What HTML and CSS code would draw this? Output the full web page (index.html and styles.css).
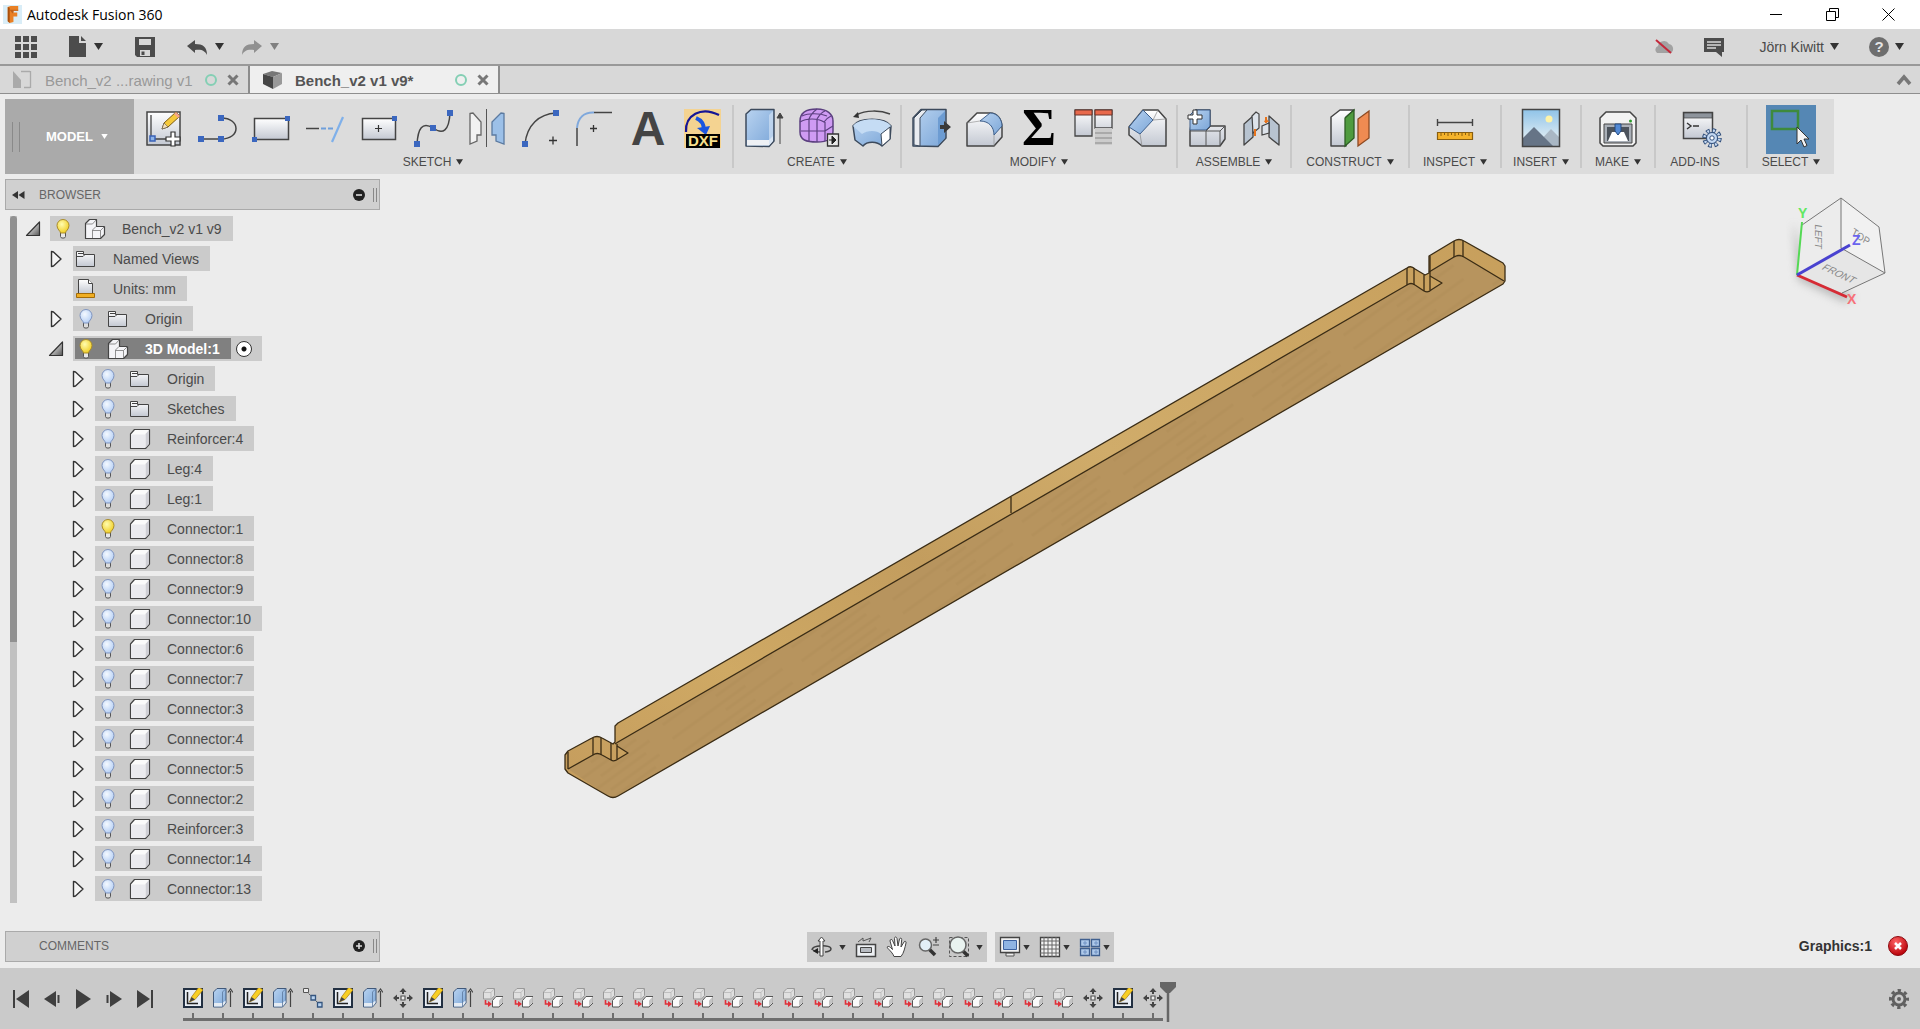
FILE: index.html
```html
<!DOCTYPE html>
<html lang="en">
    <head>
        <meta charset="UTF-8">
        <title>Autodesk Fusion 360</title>
        <link rel="stylesheet" href="styles.css">
    </head>
    <body>

        <!-- shared icons -->
        <svg class="sprite" aria-hidden="true">
            <defs>
                <linearGradient id="gWhite" x1="0" y1="0" x2="0" y2="1"><stop offset="0" stop-color="#fff"/><stop offset="1" stop-color="#c3c8d2"/></linearGradient>
                <linearGradient id="gBlue" x1="0" y1="0" x2="1" y2="1"><stop offset="0" stop-color="#b9d3f0"/><stop offset="1" stop-color="#7ba6d8"/></linearGradient>
                <linearGradient id="gSky" x1="0" y1="0" x2="0" y2="1"><stop offset="0" stop-color="#8fc3e8"/><stop offset="1" stop-color="#f2f6f6"/></linearGradient>
                <linearGradient id="gTri" x1="0" y1="0" x2="1" y2="1"><stop offset="0.3" stop-color="#ddd"/><stop offset="1" stop-color="#555"/></linearGradient>
                <radialGradient id="gOn" cx="0.4" cy="0.35" r="0.7"><stop offset="0" stop-color="#fffcb0"/><stop offset="1" stop-color="#f0cc1c"/></radialGradient>
                <radialGradient id="gOff" cx="0.4" cy="0.35" r="0.7"><stop offset="0" stop-color="#f4f9ff"/><stop offset="1" stop-color="#b3cdf4"/></radialGradient>
                <radialGradient id="gRed" cx="0.4" cy="0.3" r="0.7"><stop offset="0" stop-color="#f66"/><stop offset="1" stop-color="#b80008"/></radialGradient>
            </defs>

            <symbol id="down" viewBox="0 0 9 7"><path d="M0 0h9L4.500 7z" fill="currentColor"/></symbol>

            <!-- browser tree -->
            <symbol id="bulb-on" viewBox="0 0 22 22">
                <path d="M8.500 14h5v4.500l-1 1.500h-3l-1-1.500z" fill="#e8e8e8" stroke="#555"/>
                <path d="M8.500 15c0-2-3.500-3.500-3.500-7.500a6 6 0 0 1 12 0c0 4-3.500 5.500-3.500 7.500z" fill="url(#gOn)" stroke="#a98c2c"/>
            </symbol>
            <symbol id="bulb-off" viewBox="0 0 22 22">
                <path d="M8.500 14h5v4.500l-1 1.500h-3l-1-1.500z" fill="#ddd" stroke="#555"/>
                <path d="M8.500 15c0-2-3.500-3.500-3.500-7.500a6 6 0 0 1 12 0c0 4-3.500 5.500-3.500 7.500z" fill="url(#gOff)" stroke="#7f95c0"/>
            </symbol>
            <symbol id="folder" viewBox="0 0 22 22">
                <path d="M1.500 18.500v-15h7v3h11v12z" fill="url(#gWhite)" stroke="#444" stroke-linejoin="round"/>
                <path d="M2 8.500h6l2-2M3 5.500h5" fill="none" stroke="#444"/>
            </symbol>
            <symbol id="units" viewBox="0 0 22 22">
                <path d="M3.500 15.500v-14h10l4 4v10z" fill="url(#gWhite)" stroke="#444"/>
                <path d="M13.500 1.500v4h4" fill="#fff" stroke="#444"/>
                <path d="M1.500 15.500h18v4h-18z" fill="#f0ae23" stroke="#a36c08"/>
            </symbol>
            <symbol id="body" viewBox="0 0 22 22">
                <path d="M1.500 6l4-4.500h15V16l-4 4.500h-15z" fill="#fbfbfb" stroke="#444" stroke-width="1.200" stroke-linejoin="round"/>
                <path d="M2 6.500h14V20H2z" fill="#ebebef"/>
                <path d="M16.500 6l3.500-4V16l-3.500 4z" fill="#cfcfd5"/>
            </symbol>
            <symbol id="comp" viewBox="0 0 22 22">
                <path d="M1.500 20.500V5.500l4-4h7v7h8v8l-4 4z" fill="#f4f4f7" stroke="#444" stroke-width="1.200" stroke-linejoin="round"/>
                <path d="M8.500 20v-8l3.500-3.500M8.500 12.500h8l4-4M16.500 12.500V20M2 6h6.500l3.500-4" fill="none" stroke="#777" stroke-width=".8"/>
            </symbol>
            <symbol id="closed" viewBox="0 0 16 18"><path d="M3.500 1.500v15l2-.5 7.500-7-7.500-7z" fill="#f5f5f5" stroke="#333" stroke-width="1.400" stroke-linejoin="round"/></symbol>
            <symbol id="open" viewBox="0 0 16 18"><path d="M14.500 2v13.500H1.500z" fill="url(#gTri)" stroke="#333" stroke-width="1.200" stroke-linejoin="round"/></symbol>

            <!-- timeline -->
            <symbol id="t-sketch" viewBox="0 0 20 20">
                <path d="M1 1h18v18H1z" fill="#e9eef5" stroke="#223042" stroke-width="2"/>
                <path d="M4.500 4v11.500H15" fill="none" stroke="#222" stroke-width="1.500"/>
                <path d="M6.500 14l2-5L16-1l4 3-8 9.500z" fill="#f8cf25" stroke="#a87c14" stroke-width=".7"/>
                <path d="M6.500 14l2-5 3.500 2.500z" fill="#444"/>
            </symbol>
            <symbol id="t-extrude" viewBox="0 0 20 20">
                <path d="M.5 19V4l3.500-3.500h9V15l-3.500 4z" fill="url(#gBlue)" stroke="#41597a"/>
                <path d="M1 15h8.500l3-2.500V15l-3 3.500H1z" fill="#e4ebf3"/>
                <path d="M9.500 19V4L13 .5" fill="none" stroke="#5b779d" stroke-width=".8"/>
                <path d="M17.500 19V3M15 4.500L17.500 1 20 4.500" fill="none" stroke="#444" stroke-width="1.200"/>
            </symbol>
            <symbol id="t-pattern" viewBox="0 0 20 20">
                <path d="M4 4l12 12" stroke="#555" stroke-dasharray="2 1"/>
                <path d="M.5.5h5v4h-5z" fill="#eee" stroke="#555"/>
                <path d="M8 7.500h4.500V12H8zM14.500 14.500H19V19h-4.500z" fill="#b9d3f0" stroke="#34557f" stroke-width="1.300"/>
            </symbol>
            <symbol id="t-move" viewBox="0 0 20 20">
                <path d="M10 0l3.500 4h-7zM10 20l3.500-4h-7zM0 10l4-3.500v7zM20 10l-4-3.500v7z" fill="#444"/>
                <path d="M10 3v3M10 14v3M3 10h3M14 10h3" stroke="#444" stroke-width="2"/>
                <path d="M8 8h4v4H8z" fill="#eee" stroke="#555" stroke-width="1.200"/>
            </symbol>
            <symbol id="t-insert" viewBox="0 0 20 20">
                <path d="M.5 11V4l3.500-3.500h7.500v7l-3 3.500z" fill="#e0e0e0" stroke="#999"/>
                <path d="M8 10.500V4.500L11 1M1 4.500h7" fill="none" stroke="#b0b0b0" stroke-width=".7"/>
                <path d="M9.500 19v-6.500l3.500-4h7v6.500l-4 4z" fill="#fafafa" stroke="#555" stroke-linejoin="round"/>
                <path d="M16 18.500v-6l3.500-3.500v5.500z" fill="#c4c4c4"/>
                <path d="M2.500 12v4h3" fill="none" stroke="#e0303a" stroke-width="1.600"/><path d="M5 13l4 3-4 3z" fill="#e0303a"/>
            </symbol>
            <symbol id="gear" viewBox="0 0 22 22">
                <circle cx="11" cy="11" r="8.500" fill="none" stroke="currentColor" stroke-width="3" stroke-dasharray="3.300 3.376" stroke-dashoffset="1.600"/>
                <circle cx="11" cy="11" r="6" fill="none" stroke="currentColor" stroke-width="3"/>
                <circle cx="11" cy="11" r="2" fill="currentColor"/>
            </symbol>
        </svg>

        <header class="titlebar">
            <svg class="logo" viewBox="0 0 20 20"><path d="M0 0h20v20H0z" fill="#d9edf7"/><path d="M5 2l3-1h8v5h-5v2h4v4h-4v6l-4 1-2-2z" fill="#e98024"/><path d="M5 2l2 1v16l-2-2z" fill="#a9500d"/><path d="M7 5h9v1h-5v2l-1 1z" fill="#c0611a"/></svg>
            <h1 class="title">Autodesk Fusion 360</h1>
            <button class="win" aria-label="Minimize"><svg viewBox="0 0 13 13"><path d="M0 6.500h12" stroke="#000"/></svg></button>
            <button class="win" aria-label="Restore"><svg viewBox="0 0 13 13"><path d="M.5 3.500h9v9h-9zM3.500 3.500v-3h9v9h-3" fill="none" stroke="#000"/></svg></button>
            <button class="win" aria-label="Close"><svg viewBox="0 0 13 13"><path d="M.5.5l12 12M12.500.5l-12 12" stroke="#000"/></svg></button>
        </header>

        <div class="quickbar">
            <button aria-label="Data panel"><svg class="q22" viewBox="0 0 22 22"><path d="M0 0h6v6H0zM8 0h6v6H8zM16 0h6v6h-6zM0 8h6v6H0zM8 8h6v6H8zM16 8h6v6h-6zM0 16h6v6H0zM8 16h6v6H8zM16 16h6v6h-6z" fill="#4c4c4c"/></svg></button>
            <button aria-label="File"><svg class="doc" viewBox="0 0 17 21"><path d="M0 0h10v7h7v14H0zM12 0l5 5h-5z" fill="#4c4c4c"/></svg><svg class="down"><use href="#down"/></svg></button>
            <button aria-label="Save"><svg class="q20" viewBox="0 0 20 20"><path d="M0 0h20v20H2l-2-2z" fill="#4c4c4c"/><path d="M4 2h12v6H4zM5 13h10v6H5z" fill="#d8d8d8"/><path d="M6.500 14.500h3V18h-3z" fill="#4c4c4c"/></svg></button>
            <div class="history">
                <button aria-label="Undo"><svg class="q20" viewBox="0 0 20 20"><path d="M0 9l8-6v4c8 0 12 3 12 11-2-4-5-6-12-5v3z" fill="#4c4c4c"/></svg><svg class="down"><use href="#down"/></svg></button>
                <button class="dim" aria-label="Redo"><svg class="q20" viewBox="0 0 20 20"><path d="M20 9l-8-6v4C4 7 0 10 0 18c2-4 5-6 12-5v3z" fill="#909090"/></svg><svg class="down"><use href="#down"/></svg></button>
            </div>
            <div class="account">
                <button aria-label="Work offline"><svg class="q20" viewBox="0 0 20 20"><path d="M3 16a4 4 0 0 1 1-7 6 6 0 0 1 11-2 5 5 0 0 1 2 9z" fill="#a2a2a2"/><path d="M2 3l15 13" stroke="#c4283a" stroke-width="2"/></svg></button>
                <button aria-label="Comments"><svg class="q20" viewBox="0 0 20 20"><path d="M0 1h20v14h-2v5l-6-5H0z" fill="#4c4c4c"/><path d="M3 5h14M3 8h14M3 11h9" stroke="#d8d8d8" stroke-width="1.400"/></svg></button>
                <button class="user">Jörn Kiwitt <svg class="down"><use href="#down"/></svg></button>
                <button class="help" aria-label="Help"><svg class="q20" viewBox="0 0 20 20"><circle cx="10" cy="10" r="10" fill="#6e6e6e"/><text x="10" y="15" text-anchor="middle" class="help-mark">?</text></svg><svg class="down"><use href="#down"/></svg></button>
            </div>
        </div>

        <nav class="tabs">
            <div class="tab">
                <svg class="tab-icon" viewBox="0 0 21 20"><path d="M1 18V1l8 9v8z" fill="#aaa"/><path d="M9 1.500h9M18.500 1v17M12 17.500h6" fill="none" stroke="#aaa" stroke-width="1.300"/></svg>
                <a href="#drawing">Bench_v2 ...rawing v1</a>
                <span class="ring"></span>
                <button aria-label="Close tab"><svg class="cross" viewBox="0 0 12 12"><path d="M1.500 1.500l9 9M10.500 1.500l-9 9" stroke="#777" stroke-width="3"/></svg></button>
            </div>
            <div class="tab current">
                <svg class="tab-icon" viewBox="0 0 21 20"><path d="M1 4l9-3 10 2-9 4z" fill="#777"/><path d="M1 4l10 3v12L1 14z" fill="#454545"/><path d="M11 7l9-4v11l-9 5z" fill="#999"/></svg>
                <a href="#bench">Bench_v2 v1 v9*</a>
                <span class="ring"></span>
                <button aria-label="Close tab"><svg class="cross" viewBox="0 0 12 12"><path d="M1.500 1.500l9 9M10.500 1.500l-9 9" stroke="#777" stroke-width="3"/></svg></button>
            </div>
            <button class="collapse" aria-label="Collapse"><svg viewBox="0 0 16 12"><path d="M2 10l6-7 6 7" fill="none" stroke="#777" stroke-width="3.500"/></svg></button>
        </nav>

        <main class="workspace">

            <!-- model canvas -->
            <svg class="canvas" viewBox="0 94 1920 874">
                <defs>
                    <pattern id="grain" width="260" height="17" patternUnits="userSpaceOnUse" patternTransform="rotate(-36)">
                        <path d="M0 3h80M110 7h90M30 12h60M170 15h70" stroke="#8f6f3c" stroke-opacity=".09" stroke-width="3"/>
                    </pattern>
                    <linearGradient id="edge" x1="0" y1="1" x2="1" y2="0">
                        <stop offset="0" stop-color="#c49c5d"/><stop offset=".2" stop-color="#cfa964"/><stop offset=".4" stop-color="#c39d5e"/><stop offset=".6" stop-color="#d0ac6a"/><stop offset="1" stop-color="#c79f5c"/>
                    </linearGradient>
                </defs>
                <path d="M565 755L568 751 592 738Q597 735 602 738L613 744 615 742V726L618 723 1407 268Q1411 265 1415 269L1425 275 1429 273V256L1454 241Q1459 238 1464 241L1503 263 1505 266V281L1503 284 618 796Q613 799 608 796L568 773 565 769Z" fill="url(#edge)"/>
                <path d="M568 769L593 755Q597 752 602 755L611 760Q614 762 618 759L628 753 617 746 618 742 1407 285Q1411 282 1415 285L1424 291Q1428 293 1431 290L1442 283 1430 276V271L1454 257Q1459 254 1464 257L1503 280 1503 284 618 796Q613 799 608 796Z" fill="#b7945e"/>
                <path d="M568 769L593 755Q597 752 602 755L611 760Q614 762 618 759L628 753 617 746 618 742 1407 285Q1411 282 1415 285L1424 291Q1428 293 1431 290L1442 283 1430 276V271L1454 257Q1459 254 1464 257L1503 280 1503 284 618 796Q613 799 608 796Z" fill="url(#grain)"/>
                <g class="outline">
                    <path d="M565 755L568 751 592 738Q597 735 602 738L613 744 615 742V726L618 723 1407 268Q1411 265 1415 269L1425 275 1429 273V256L1454 241Q1459 238 1464 241L1503 263 1505 266V281L1503 284 618 796Q613 799 608 796L568 773 565 769Z"/>
                    <path d="M568 769L593 755Q597 752 602 755L611 760Q614 762 618 759L628 753 617 746M615 744L618 742 1407 285Q1411 282 1415 285L1424 291Q1428 293 1431 290L1442 283 1430 276M1429 272L1454 257Q1459 254 1464 257L1504 281"/>
                    <path d="M568 752V769M593 738V755M601 738V755M611 743V760M617 744V759M1011 497V513M1407 268V285M1414 268V285M1424 275V291M1430 256V290M1454 241V257M1463 241V257"/>
                </g>
            </svg>

            <svg class="viewcube" viewBox="1780 185 120 125">
                <defs><filter id="soft"><feGaussianBlur stdDeviation="4"/></filter></defs>
                <path d="M1793 222l5 58 46 22 10-4-50-40z" fill="#888" opacity=".5" filter="url(#soft)"/>
                <path d="M1841 198L1879 227 1885 273 1842 293 1797 275 1802 225Z" fill="#e6e6e6"/>
                <path d="M1841 198V248L1797 275 1802 225Z" fill="#ececec"/>
                <path d="M1841 198L1879 227 1885 273 1841 248Z" fill="#f1f1f1"/>
                <path d="M1802 225L1841 198 1879 227 1885 273 1842 293M1841 198V248L1885 273" fill="none" stroke="#777"/>
                <path d="M1797 275L1802 222" stroke="#54d954" stroke-width="2"/>
                <path d="M1797 275L1847 297" stroke="#d62b35" stroke-width="3"/>
                <path d="M1797 275L1850 245" stroke="#4942d0" stroke-width="3"/>
                <text class="face" transform="translate(1815 224) rotate(90) skewX(-10)">LEFT</text>
                <text class="face" transform="translate(1851 234) rotate(35) skewX(10)">TOP</text>
                <text class="face" transform="translate(1821 269) rotate(25) skewX(-20)">FRONT</text>
                <text x="1798" y="218" fill="#63e863" class="axis">Y</text>
                <text x="1847" y="304" fill="#f77078" class="axis">X</text>
                <text x="1852" y="245" fill="#6a64ee" class="axis">Z</text>
            </svg>

            <div class="ribbon">
                <button class="mode"><span>MODEL</span> <svg class="down"><use href="#down"/></svg></button>

                <section class="group">
                    <div class="tools">
                        <button aria-label="Create sketch"><svg viewBox="0 0 36 38"><path d="M2 3h33v33H2z" fill="url(#gWhite)" stroke="#444" stroke-width="1.500"/><path d="M6 6v24h22" fill="none" stroke="#444" stroke-width="1.300"/><path d="M5 27h5v5H5z" fill="#8db4e8" stroke="#3a62b8" stroke-width="1.500"/><path d="M17 20l2-6L31 3l4 4-12 11z" fill="#f5c93b" stroke="#7b5a13"/><path d="M31 3l4 4-2 2-4-4z" fill="#f2a58e"/><path d="M17 20l2-6 4 4z" fill="#f7e0b5" stroke="#555" stroke-width=".6"/><path d="M26 23h4v5h5v4h-5v5h-4v-5h-5v-4h5z" fill="#fff" stroke="#333" stroke-width="1.200"/></svg></button>
                        <button aria-label="Line"><svg viewBox="0 0 36 38"><path d="M2 30h20C42 30 42 9 22 9" fill="none" stroke="#444" stroke-width="1.500"/><path d="M-1 27h6v6h-6zM19 27h6v6h-6zM19 6h6v6h-6z" fill="#3b67bf"/></svg></button>
                        <button aria-label="Rectangle"><svg viewBox="0 0 36 38"><path d="M1.500 9.500h34v21h-34z" fill="url(#gWhite)" stroke="#444" stroke-width="1.500"/><path d="M-1 28h5v5h-5zM32 7h5v5h-5z" fill="#3b67bf"/></svg></button>
                        <button aria-label="Trim"><svg viewBox="0 0 36 38"><path d="M-1 19.500h13" stroke="#444" stroke-width="1.500"/><path d="M14 19.500h12" stroke="#6f9fdb" stroke-width="2" stroke-dasharray="5 2"/><path d="M36 8L25 33" stroke="#7fb0ea" stroke-width="2.200"/></svg></button>
                        <button aria-label="Center rectangle"><svg viewBox="0 0 36 38"><path d="M1.500 9.500h33v21h-33z" fill="url(#gWhite)" stroke="#444" stroke-width="1.500"/><path d="M31 7h5v5h-5z" fill="#3b67bf"/><path d="M14 19.500h7M17.500 16v7" stroke="#333" stroke-width="1.200"/></svg></button>
                        <button aria-label="Spline"><svg viewBox="0 0 36 38"><path d="M2 35C3 20 7 12 18 19 28 26 34 22 35 4" fill="none" stroke="#444" stroke-width="1.500"/><path d="M-1 32h6v6h-6zM15 16h6v6h-6zM32 1h6v6h-6z" fill="#3b67bf"/></svg></button>
                        <button aria-label="Mirror"><svg viewBox="0 0 36 38"><path d="M1 4.500l3-.5 8 9v13H8v6l-7 3z" fill="#f2f2f2" stroke="#666" stroke-width="1.300"/><path d="M35 4.500l-3-.5-9 9v13h4v6l8 3z" fill="#9cc0e8" stroke="#5b7aa0" stroke-width="1.300"/><path d="M17.500 0v38" stroke="#555"/></svg></button>
                        <button aria-label="Arc"><svg viewBox="0 0 36 38"><path d="M2 35C4 16 16 5 33 4" fill="none" stroke="#444" stroke-width="1.500"/><path d="M-1 32h6v6h-6zM30 1h6v6h-6z" fill="#3b67bf"/><path d="M26 31.500h8M30 27.500v8" stroke="#333" stroke-width="1.300"/></svg></button>
                        <button aria-label="Fillet sketch"><svg viewBox="0 0 36 38"><path d="M0 37V19M17 3.500h18" stroke="#444" stroke-width="1.500"/><path d="M0 19C1 9 7 3 17 3.500" fill="none" stroke="#7fa8dc" stroke-width="2"/><path d="M13 19.500h7M16.500 16v7" stroke="#333" stroke-width="1.300"/></svg></button>
                        <button aria-label="Text"><svg viewBox="0 0 36 38"><text x="17" y="36" text-anchor="middle" class="big-a">A</text></svg></button>
                        <button aria-label="Insert DXF"><svg viewBox="0 0 36 38"><path d="M-1 0h37v39H-1z" fill="#f4d391"/><path d="M1 23C0 6 16-3 34 6" fill="none" stroke="#151596" stroke-width="2.200"/><path d="M11 9c5 2 8 6 8 12" fill="none" stroke="#1b56e0" stroke-width="4"/><path d="M12 19l13-2-4 9z" fill="#1b56e0"/><path d="M1 25h34v14H1z" fill="#000"/><text x="18" y="37" text-anchor="middle" class="dxf">DXF</text></svg></button>
                    </div>
                    <button class="label">SKETCH <svg class="down"><use href="#down"/></svg></button>
                </section>

                <section class="group">
                    <div class="tools">
                        <button aria-label="Extrude"><svg viewBox="0 0 36 38"><path d="M1 37V5l5-4.500h23V32l-5 5.500z" fill="url(#gBlue)" stroke="#3c4a5c" stroke-width="1.500" stroke-linejoin="round"/><path d="M2 31h22l4-4v5l-4 4.500H2z" fill="#eef1f5"/><path d="M24 6v30l4-5V2z" fill="#cfe0f3" opacity=".7"/><path d="M35 35V7M32 9l3-5 3 5z" fill="#444" stroke="#444"/></svg></button>
                        <button aria-label="Create form"><svg viewBox="0 0 36 38"><path d="M1 12C1 3 8 0 18 0s16 5 16 12v10c0 8-5 11-16 11S1 31 1 23z" fill="#cf9bf3" stroke="#5c4080" stroke-width="1.500"/><path d="M1 13c6-4 18-4 24 0 2-3 5-5 7-6M2 22h24c3-2 6-4 8-5M10 10v23M18 10v23M26 13v19M10 10c2-5 4-7 8-10M18 10c3-5 5-7 8-8M3 7c6-3 18-3 25 0" fill="none" stroke="#5c4080" stroke-width="1.200"/><path d="M28.500 25h11v12h-11z" fill="#e8e8e8" stroke="#333" stroke-width="1.300"/><path d="M30 31h4M33 27l4 4-4 4z" fill="#222" stroke="#222"/></svg></button>
                        <button aria-label="Revolve"><svg viewBox="0 0 36 38"><path d="M3 6c10-5 24-5 34-1" fill="none" stroke="#444" stroke-width="1.500"/><path d="M0 8l5-5 1 6z" fill="#333"/><path d="M0 17c6-9 32-9 38 0l-1 13-8 7c-5-5-15-5-19 0L2 31z" fill="url(#gBlue)" stroke="#3c4a5c" stroke-width="1.500" stroke-linejoin="round"/><path d="M0 17l9 8c5-4 15-4 19 0l10-8c-6-9-32-9-38 0z" fill="#c5dcf4"/><path d="M28 25l9-7v12l-8 7z" fill="#fff" stroke="#3c4a5c"/></svg></button>
                    </div>
                    <button class="label">CREATE <svg class="down"><use href="#down"/></svg></button>
                </section>

                <section class="group">
                    <div class="tools">
                        <button aria-label="Press pull"><svg viewBox="0 0 36 38"><path d="M0 37V9L8 .500h25V29l-8 8.500z" fill="url(#gBlue)" stroke="#3c4a5c" stroke-width="1.500" stroke-linejoin="round"/><path d="M1 36V9l8-8h5L7 9v28z" fill="#e9ecf1" stroke="#3c4a5c"/><path d="M25 9v27l7-7V2z" fill="#6d9cd2"/><path d="M27 16h4v-4l7 6-7 6v-4h-4z" fill="#3a3a3a"/></svg></button>
                        <button aria-label="Fillet"><svg viewBox="0 0 36 38"><path d="M0 37V14L10 4h13c8 0 12 7 12 15v9l-8 9z" fill="url(#gWhite)" stroke="#444" stroke-width="1.500" stroke-linejoin="round"/><path d="M13 12l10-8c8 0 12 7 12 13l-8 9c0-8-5-14-14-14z" fill="url(#gBlue)" stroke="#3e5f8b"/><path d="M27 26v11M0 14l13-2" stroke="#888" stroke-width=".6"/></svg></button>
                        <button aria-label="Change parameters"><svg viewBox="0 0 36 38"><text x="18" y="36" text-anchor="middle" class="sigma">Σ</text></svg></button>
                        <button aria-label="Component table"><svg viewBox="0 0 36 38"><path d="M0 1h17v26H0zM20 1h17v18H20z" fill="url(#gWhite)" stroke="#444" stroke-width="1.300"/><path d="M0 1h17v5H0zM20 1h17v5H20z" fill="#e8694c" stroke="#6b352a"/><path d="M20 19h17v17H20z" fill="#ccc"/><path d="M20 24h17M20 29h17M20 34h17" stroke="#888"/></svg></button>
                        <button aria-label="Chamfer"><svg viewBox="0 0 36 38"><path d="M0 18L14 1h15l8 9v27H13L0 26z" fill="url(#gWhite)" stroke="#444" stroke-width="1.500" stroke-linejoin="round"/><path d="M14 1l10 10-13 14L0 18z" fill="url(#gBlue)" stroke="#3e5f8b"/><path d="M24 11l5-10M24 11l13-1M11 25l2 12" stroke="#888" stroke-width=".7"/></svg></button>
                    </div>
                    <button class="label">MODIFY <svg class="down"><use href="#down"/></svg></button>
                </section>

                <section class="group">
                    <div class="tools">
                        <button aria-label="New component"><svg viewBox="0 0 36 38"><path d="M1 37V22l3-19 3-2h14v16h15v13l-5 7z" fill="url(#gWhite)" stroke="#444" stroke-width="1.500" stroke-linejoin="round"/><path d="M1 21V6l5-5h15v16l-4 4z" fill="url(#gBlue)" stroke="#3e5f8b"/><path d="M1 22h16v15M17 22l5-5M17 22h14v15M31 22l5-5" fill="none" stroke="#555"/><path d="M4 1h4v5h5v4H8v5H4v-5h-5V6h5z" fill="#fff" stroke="#333"/></svg></button>
                        <button aria-label="Joint"><svg viewBox="0 0 36 38"><path d="M1 15l9-8v21l-9 8zM36 16l-10-9v21l10 8z" fill="#b7c3d0" stroke="#444" stroke-width="1.300" stroke-linejoin="round"/><path d="M9 7l4-4 3 2v14l-6 5z" fill="#dde3ea" stroke="#444" stroke-width="1.200"/><path d="M19 17l7-3v10l-7 2z" fill="#dde3ea" stroke="#444" stroke-width="1.200"/><path d="M12 20v7M23 8v6" stroke="#e8741c" stroke-width="2"/><path d="M21 13h5l-3-4z" fill="#e8741c"/></svg></button>
                    </div>
                    <button class="label">ASSEMBLE <svg class="down"><use href="#down"/></svg></button>
                </section>

                <section class="group w118">
                    <div class="tools">
                        <button aria-label="Offset plane"><svg viewBox="0 0 36 38"><path d="M-1 37V8l9-7h14l-8 7v29z" fill="url(#gWhite)" stroke="#444" stroke-width="1.500" stroke-linejoin="round"/><path d="M13 37V9l9-8v28z" fill="#4f9b3f" stroke="#2e5e26" stroke-width="1.300"/><path d="M26 37V10l11-8v27z" fill="#ef8b52" stroke="#8d4a22" stroke-width="1.300"/></svg></button>
                    </div>
                    <button class="label">CONSTRUCT <svg class="down"><use href="#down"/></svg></button>
                </section>

                <section class="group w92">
                    <div class="tools">
                        <button aria-label="Measure"><svg viewBox="0 0 36 38"><path d="M.5 10v7M35.500 10v7M1 13.500h34" stroke="#444" stroke-width="1.400"/><path d="M.5 23.500h35v7H.5z" fill="#f5b32b" stroke="#8a5f10" stroke-width="1.200"/><path d="M4 24v3M7.500 24v2M11 24v3M14.500 24v2M18 24v3M21.500 24v2M25 24v3M28.500 24v2M32 24v3" stroke="#8a5f10"/></svg></button>
                    </div>
                    <button class="label">INSPECT <svg class="down"><use href="#down"/></svg></button>
                </section>

                <section class="group w80">
                    <div class="tools">
                        <button aria-label="Insert image"><svg viewBox="0 0 36 38"><path d="M-.5.5h37v37h-37z" fill="url(#gSky)"/><circle cx="26" cy="10" r="3.500" fill="#fdf3a8"/><path d="M12 37l16-17 8 8v9z" fill="#a9b7c4"/><path d="M0 29l11-11 19 19H0z" fill="#667486"/><path d="M-.5.500h37v37h-37z" fill="none" stroke="#444" stroke-width="1.500"/></svg></button>
                    </div>
                    <button class="label">INSERT <svg class="down"><use href="#down"/></svg></button>
                </section>

                <section class="group w74">
                    <div class="tools">
                        <button aria-label="3D print"><svg viewBox="0 0 36 38"><path d="M0 34V9l6-6h24l6 6v25l-3 3H3z" fill="#f2f2f2" stroke="#444" stroke-width="1.500" stroke-linejoin="round"/><path d="M4 15h28v19H4z" fill="#aab0b8" stroke="#444"/><path d="M7 18h22v14H7z" fill="#4c535c"/><path d="M8 32l4-9h12l4 9z" fill="#fff"/><path d="M15 15h6v7l-3 4-3-4z" fill="#5289d4" stroke="#244a80"/><circle cx="30.500" cy="12" r="1.500" fill="#2a9a2a"/></svg></button>
                    </div>
                    <button class="label">MAKE <svg class="down"><use href="#down"/></svg></button>
                </section>

                <section class="group w92">
                    <div class="tools">
                        <button aria-label="Scripts and add-ins"><svg viewBox="0 0 36 38"><path d="M.5 3.500h29v26H.5z" fill="url(#gWhite)" stroke="#444" stroke-width="1.500"/><path d="M1 4h28v5H1z" fill="#8e949c" stroke="#444" stroke-width=".7"/><path d="M4 14l4 3-4 3M10 17h6" fill="none" stroke="#333" stroke-width="1.400"/><circle cx="29" cy="29" r="7.500" fill="none" stroke="#2f4d79" stroke-width="4.500" stroke-dasharray="3.500 2.390"/><circle cx="29" cy="29" r="5.500" fill="#c3d8f2" stroke="#2f4d79"/><circle cx="29" cy="29" r="7.500" fill="none" stroke="#c3d8f2" stroke-width="2.500" stroke-dasharray="2 3.890" stroke-dashoffset="-.7"/><circle cx="29" cy="29" r="2.200" fill="#fff" stroke="#2f4d79"/></svg></button>
                    </div>
                    <button class="label no-menu">ADD-INS</button>
                </section>

                <section class="group w88">
                    <div class="tools">
                        <button class="active" aria-label="Select"><svg viewBox="0 0 36 38"><path d="M0 2h26v18H0z" fill="none" stroke="#3e8a3c" stroke-width="2.500"/><path d="M25 18v17l4-4 3 7 3-1.500-3-6.500h5z" fill="#f4f4f4" stroke="#333" stroke-linejoin="round"/></svg></button>
                    </div>
                    <button class="label">SELECT <svg class="down"><use href="#down"/></svg></button>
                </section>
            </div>

            <div class="panel-head">
                <button class="rewind" aria-label="Collapse browser"><svg viewBox="0 0 13 8"><path d="M6 0v8L0 4zM12.500 0v8l-6-4z" fill="#333"/></svg></button>
                <h2>BROWSER</h2>
                <button aria-label="Hide"><svg class="dot" viewBox="0 0 12 12"><circle cx="6" cy="6" r="6" fill="#222"/><path d="M3 6h6" stroke="#ddd" stroke-width="1.600"/></svg></button>
                <span class="grip"></span>
            </div>

            <div class="browser">
                <div class="scroll"><div class="thumb"></div></div>
                <ul class="tree">
                    <li><button class="toggle" aria-label="Collapse"><svg><use href="#open"/></svg></button><span class="chip"><svg><use href="#bulb-on"/></svg><svg><use href="#comp"/></svg><span class="name">Bench_v2 v1 v9</span></span></li>
                    <li class="l1"><button class="toggle" aria-label="Expand"><svg><use href="#closed"/></svg></button><span class="chip"><svg><use href="#folder"/></svg><span class="name">Named Views</span></span></li>
                    <li class="l1"><span class="toggle"></span><span class="chip"><svg><use href="#units"/></svg><span class="name">Units: mm</span></span></li>
                    <li class="l1"><button class="toggle" aria-label="Expand"><svg><use href="#closed"/></svg></button><span class="chip"><svg><use href="#bulb-off"/></svg><svg><use href="#folder"/></svg><span class="name">Origin</span></span></li>
                    <li class="l1"><button class="toggle" aria-label="Collapse"><svg><use href="#open"/></svg></button><span class="chip selected"><svg><use href="#bulb-on"/></svg><svg><use href="#comp"/></svg><span class="name">3D Model:1</span></span><label class="activate"><input type="radio" name="active" aria-label="Activate 3D Model:1" checked></label></li>
                    <li class="l2"><button class="toggle" aria-label="Expand"><svg><use href="#closed"/></svg></button><span class="chip"><svg><use href="#bulb-off"/></svg><svg><use href="#folder"/></svg><span class="name">Origin</span></span></li>
                    <li class="l2"><button class="toggle" aria-label="Expand"><svg><use href="#closed"/></svg></button><span class="chip"><svg><use href="#bulb-off"/></svg><svg><use href="#folder"/></svg><span class="name">Sketches</span></span></li>
                    <li class="l2"><button class="toggle" aria-label="Expand"><svg><use href="#closed"/></svg></button><span class="chip"><svg><use href="#bulb-off"/></svg><svg><use href="#body"/></svg><span class="name">Reinforcer:4</span></span></li>
                    <li class="l2"><button class="toggle" aria-label="Expand"><svg><use href="#closed"/></svg></button><span class="chip"><svg><use href="#bulb-off"/></svg><svg><use href="#body"/></svg><span class="name">Leg:4</span></span></li>
                    <li class="l2"><button class="toggle" aria-label="Expand"><svg><use href="#closed"/></svg></button><span class="chip"><svg><use href="#bulb-off"/></svg><svg><use href="#body"/></svg><span class="name">Leg:1</span></span></li>
                    <li class="l2"><button class="toggle" aria-label="Expand"><svg><use href="#closed"/></svg></button><span class="chip"><svg><use href="#bulb-on"/></svg><svg><use href="#body"/></svg><span class="name">Connector:1</span></span></li>
                    <li class="l2"><button class="toggle" aria-label="Expand"><svg><use href="#closed"/></svg></button><span class="chip"><svg><use href="#bulb-off"/></svg><svg><use href="#body"/></svg><span class="name">Connector:8</span></span></li>
                    <li class="l2"><button class="toggle" aria-label="Expand"><svg><use href="#closed"/></svg></button><span class="chip"><svg><use href="#bulb-off"/></svg><svg><use href="#body"/></svg><span class="name">Connector:9</span></span></li>
                    <li class="l2"><button class="toggle" aria-label="Expand"><svg><use href="#closed"/></svg></button><span class="chip"><svg><use href="#bulb-off"/></svg><svg><use href="#body"/></svg><span class="name">Connector:10</span></span></li>
                    <li class="l2"><button class="toggle" aria-label="Expand"><svg><use href="#closed"/></svg></button><span class="chip"><svg><use href="#bulb-off"/></svg><svg><use href="#body"/></svg><span class="name">Connector:6</span></span></li>
                    <li class="l2"><button class="toggle" aria-label="Expand"><svg><use href="#closed"/></svg></button><span class="chip"><svg><use href="#bulb-off"/></svg><svg><use href="#body"/></svg><span class="name">Connector:7</span></span></li>
                    <li class="l2"><button class="toggle" aria-label="Expand"><svg><use href="#closed"/></svg></button><span class="chip"><svg><use href="#bulb-off"/></svg><svg><use href="#body"/></svg><span class="name">Connector:3</span></span></li>
                    <li class="l2"><button class="toggle" aria-label="Expand"><svg><use href="#closed"/></svg></button><span class="chip"><svg><use href="#bulb-off"/></svg><svg><use href="#body"/></svg><span class="name">Connector:4</span></span></li>
                    <li class="l2"><button class="toggle" aria-label="Expand"><svg><use href="#closed"/></svg></button><span class="chip"><svg><use href="#bulb-off"/></svg><svg><use href="#body"/></svg><span class="name">Connector:5</span></span></li>
                    <li class="l2"><button class="toggle" aria-label="Expand"><svg><use href="#closed"/></svg></button><span class="chip"><svg><use href="#bulb-off"/></svg><svg><use href="#body"/></svg><span class="name">Connector:2</span></span></li>
                    <li class="l2"><button class="toggle" aria-label="Expand"><svg><use href="#closed"/></svg></button><span class="chip"><svg><use href="#bulb-off"/></svg><svg><use href="#body"/></svg><span class="name">Reinforcer:3</span></span></li>
                    <li class="l2"><button class="toggle" aria-label="Expand"><svg><use href="#closed"/></svg></button><span class="chip"><svg><use href="#bulb-off"/></svg><svg><use href="#body"/></svg><span class="name">Connector:14</span></span></li>
                    <li class="l2"><button class="toggle" aria-label="Expand"><svg><use href="#closed"/></svg></button><span class="chip"><svg><use href="#bulb-off"/></svg><svg><use href="#body"/></svg><span class="name">Connector:13</span></span></li>
                </ul>
            </div>

            <div class="bottom-row">
                <div class="panel-head comments">
                    <h2>COMMENTS</h2>
                    <button aria-label="Show comments"><svg class="dot" viewBox="0 0 12 12"><circle cx="6" cy="6" r="6" fill="#222"/><path d="M3 6h6M6 3v6" stroke="#ddd" stroke-width="1.600"/></svg></button>
                    <span class="grip"></span>
                </div>

                <div class="navbar">
                    <div class="nav-group">
                        <button class="orbit" aria-label="Orbit"><svg viewBox="0 0 22 22"><path d="M1 14c0-5 19-6 19-1 0 2-4 3-6 3M2 14c2 2 5 2 8 2" fill="none" stroke="#444" stroke-width="1.500"/><path d="M9 20V5H7l3.500-4L14 5h-2v15z" fill="#fff" stroke="#444"/><path d="M2 15l5-3v6z" fill="#222"/></svg><svg class="down"><use href="#down"/></svg></button>
                        <button aria-label="Look at"><svg viewBox="0 0 22 22"><path d="M1.500 8.500h19v12h-19z" fill="#eef1f4" stroke="#444" stroke-width="1.500"/><path d="M5.500 11.500h11v5h-11z" fill="#b8bcc2" stroke="#444"/><path d="M3 6l5-4v3l8-3-2 4" fill="none" stroke="#555"/></svg></button>
                        <button aria-label="Pan"><svg viewBox="0 0 22 22"><path d="M8 20.500c-1-3-4-6-6.500-8.500-1-2 1.500-2 3-.5l2 2L4 5c0-2 2-2 2.500-.5L9 10 8.500 2.500c0-2 2-2 2.500 0L12 10l1.500-7c.5-1.500 2.500-1 2.200.5L15 11l3-5c1-1.500 2.500-.5 2 1-1 4-2 10-5 13.500z" fill="#fff" stroke="#444"/></svg></button>
                        <button aria-label="Zoom"><svg viewBox="0 0 22 22"><path d="M12 13l6 6" stroke="#333" stroke-width="3.500"/><circle cx="8.500" cy="9" r="6" fill="#e3eff8" stroke="#666" stroke-width="1.500"/><path d="M16 4h6M19 1v6M16 9h6" stroke="#444" stroke-width="1.200"/></svg></button>
                        <button class="orbit" aria-label="Fit"><svg viewBox="0 0 22 22"><path d="M1.500 1.500h19v19h-19z" fill="none" stroke="#555" stroke-dasharray="3 2"/><path d="M15 15l5 5" stroke="#333" stroke-width="3.500"/><circle cx="10" cy="9" r="8" fill="#e9f3f0" stroke="#666" stroke-width="1.500"/></svg><svg class="down"><use href="#down"/></svg></button>
                    </div>
                    <div class="nav-group">
                        <button aria-label="Display settings"><svg viewBox="0 0 22 22"><path d="M7 17h8v3H7z" fill="#eee" stroke="#555"/><path d="M1.500 1.500h19v15h-19z" fill="#f2f2f2" stroke="#444" stroke-width="1.300"/><path d="M4.500 4.500h13v9h-13z" fill="#8fb4e3" stroke="#3d62a0"/></svg><svg class="down"><use href="#down"/></svg></button>
                        <button aria-label="Grid and snaps"><svg viewBox="0 0 22 22"><path d="M1.500 1.500h19v19h-19z" fill="#f3f3f3" stroke="#444" stroke-width="1.300"/><path d="M5 1v20M9 1v20M13 1v20M17 1v20M1 5h20M1 9h20M1 13h20M1 17h20" stroke="#666"/></svg><svg class="down"><use href="#down"/></svg></button>
                        <button aria-label="Viewports"><svg viewBox="0 0 22 22"><path d="M1.500 3.500h9v7h-9zM12.500 3.500h8v7h-8zM1.500 12.500h9v7h-9zM12.500 12.500h8v7h-8z" fill="#aec9ea" stroke="#40608f" stroke-width="1.300"/><path d="M4 7h4M6 5v4M15 7h4M17 5v4M4 16h4M6 14v4M15 16h4M17 14v4" stroke="#6488bb" stroke-width=".8"/></svg><svg class="down"><use href="#down"/></svg></button>
                    </div>
                </div>

                <div class="status">
                    <span>Graphics:1</span>
                    <button aria-label="Graphics error"><svg viewBox="0 0 20 20"><circle cx="10" cy="10" r="9.500" fill="url(#gRed)" stroke="#8c0a10"/><path d="M7 7l6 6M13 7l-6 6" stroke="#fff" stroke-width="2.500"/></svg></button>
                </div>
            </div>
        </main>

        <footer class="timeline">
            <div class="player">
                <button aria-label="To start"><svg viewBox="0 0 20 20"><path d="M3 1v18" stroke="#3f3f3f" stroke-width="2"/><path d="M18 1v18L5 10z" fill="#3f3f3f"/></svg></button>
                <button aria-label="Step back"><svg viewBox="0 0 20 20"><path d="M14 2v16L2 10z" fill="#3f3f3f"/><path d="M16.500 6v8" stroke="#3f3f3f" stroke-width="2"/></svg></button>
                <button aria-label="Play"><svg viewBox="0 0 20 20"><path d="M3 0v20L18 10z" fill="#3f3f3f"/></svg></button>
                <button aria-label="Step forward"><svg viewBox="0 0 20 20"><path d="M6 2v16l12-8z" fill="#3f3f3f"/><path d="M3.500 6v8" stroke="#3f3f3f" stroke-width="2"/></svg></button>
                <button aria-label="To end"><svg viewBox="0 0 20 20"><path d="M2 1v18l13-9z" fill="#3f3f3f"/><path d="M17 1v18" stroke="#3f3f3f" stroke-width="2"/></svg></button>
            </div>
            <ol class="track">
                <li><svg><use href="#t-sketch"/></svg></li>
                <li><svg><use href="#t-extrude"/></svg></li>
                <li><svg><use href="#t-sketch"/></svg></li>
                <li><svg><use href="#t-extrude"/></svg></li>
                <li><svg><use href="#t-pattern"/></svg></li>
                <li><svg><use href="#t-sketch"/></svg></li>
                <li><svg><use href="#t-extrude"/></svg></li>
                <li><svg><use href="#t-move"/></svg></li>
                <li><svg><use href="#t-sketch"/></svg></li>
                <li><svg><use href="#t-extrude"/></svg></li>
                <li><svg><use href="#t-insert"/></svg></li>
                <li><svg><use href="#t-insert"/></svg></li>
                <li><svg><use href="#t-insert"/></svg></li>
                <li><svg><use href="#t-insert"/></svg></li>
                <li><svg><use href="#t-insert"/></svg></li>
                <li><svg><use href="#t-insert"/></svg></li>
                <li><svg><use href="#t-insert"/></svg></li>
                <li><svg><use href="#t-insert"/></svg></li>
                <li><svg><use href="#t-insert"/></svg></li>
                <li><svg><use href="#t-insert"/></svg></li>
                <li><svg><use href="#t-insert"/></svg></li>
                <li><svg><use href="#t-insert"/></svg></li>
                <li><svg><use href="#t-insert"/></svg></li>
                <li><svg><use href="#t-insert"/></svg></li>
                <li><svg><use href="#t-insert"/></svg></li>
                <li><svg><use href="#t-insert"/></svg></li>
                <li><svg><use href="#t-insert"/></svg></li>
                <li><svg><use href="#t-insert"/></svg></li>
                <li><svg><use href="#t-insert"/></svg></li>
                <li><svg><use href="#t-insert"/></svg></li>
                <li><svg><use href="#t-move"/></svg></li>
                <li><svg><use href="#t-sketch"/></svg></li>
                <li><svg><use href="#t-move"/></svg></li>
            </ol>
            <svg class="marker" viewBox="0 0 16 40"><path d="M0 0h16v5l-6 6H6L0 5z" fill="#666"/><path d="M8 8v32" stroke="#666" stroke-width="2.500"/></svg>
            <button class="settings" aria-label="Timeline settings"><svg><use href="#gear"/></svg></button>
        </footer>

    </body>
</html>
```

FILE: styles.css
```css
* {
    box-sizing: border-box;
}

body {
    margin: 0;
    height: 100vh;
    display: flex;
    flex-direction: column;
    overflow: hidden;
    background-color: #ececec;
    color: #4a4a4a;
    font-family: "Liberation Sans", Arial, sans-serif;
    font-size: 13px;
}

button {
    display: flex;
    align-items: center;
    border: none;
    padding: 0;
    background: none;
    color: inherit;
    font: inherit;
}

svg {
    display: block;
    flex: none;
    overflow: visible;
}

h1, h2, ul, ol {
    margin: 0;
    padding: 0;
    font-weight: normal;
    list-style: none;
}

.sprite {
    position: absolute;
    width: 0;
    height: 0;
}

.down {
    width: 9px;
    height: 7px;
    color: #333;
}

/* title bar */
.titlebar {
    flex: none;
    height: 29px;
    display: flex;
    align-items: center;
    padding: 0 4px 0 3px;
    background-color: #fff;
}

.logo {
    width: 19px;
    height: 19px;
}

.title {
    flex: 1;
    margin-left: 5px;
    color: #000;
    font-family: "Open Sans", "Noto Sans", sans-serif;
    font-size: 14px;
}

.win {
    width: 56px;
    height: 29px;
    justify-content: center;
}

.win svg {
    width: 13px;
    height: 13px;
}

/* quick access bar */
.quickbar {
    flex: none;
    height: 37px;
    display: flex;
    align-items: center;
    gap: 32px;
    padding: 0 16px 0 15px;
    background-color: #d8d8d8;
    border-bottom: 2px solid #999;
}

.quickbar button {
    gap: 8px;
}

.q22 {
    width: 22px;
    height: 22px;
}

.q20 {
    width: 20px;
    height: 20px;
}

.doc {
    width: 17px;
    height: 21px;
}

.history {
    display: flex;
    gap: 18px;
}

.dim .down {
    color: #808080;
}

.account {
    display: flex;
    align-items: center;
    gap: 30px;
    margin-left: auto;
}

.account .user {
    gap: 6px;
    margin-left: 5px;
    font-size: 14px;
}

.account .help {
    gap: 6px;
}

.help-mark {
    fill: #e4e4e4;
    font-size: 15px;
    font-weight: bold;
}

/* document tabs */
.tabs {
    flex: none;
    height: 28px;
    display: flex;
    background-color: #d8d8d8;
    border-bottom: 1px solid #8e8e8e;
}

.tab {
    width: 250px;
    display: flex;
    align-items: center;
    padding: 0 9px 0 12px;
    border-right: 2px solid #8c8c8c;
}

.tab-icon {
    width: 21px;
    height: 20px;
}

.tab a {
    flex: 1;
    margin-left: 12px;
    padding-top: 2px;
    color: #999;
    font-size: 15px;
    text-decoration: none;
    white-space: nowrap;
}

.tab.current {
    background-color: #efefef;
}

.tab.current a {
    color: #555;
    font-weight: bold;
}

.ring {
    width: 12px;
    height: 12px;
    margin-right: 10px;
    border: 2px solid #84cfb4;
    border-radius: 50%;
}

.cross {
    width: 12px;
    height: 12px;
}

.collapse {
    margin-left: auto;
    margin-right: 8px;
}

.collapse svg {
    width: 16px;
    height: 12px;
}

/* workspace */
.workspace {
    position: relative;
    flex: 1;
    min-height: 0;
    display: flex;
    flex-direction: column;
    align-items: flex-start;
    padding: 5px 5px 6px;
}

.workspace > * {
    z-index: 1;
}

.workspace .canvas {
    position: absolute;
    inset: 0;
    z-index: 0;
    width: 100%;
    height: 100%;
}

.outline path {
    fill: none;
    stroke: #3a2c15;
    stroke-width: 1.3;
    stroke-linejoin: round;
}

.viewcube {
    position: absolute;
    top: 91px;
    right: 20px;
    width: 120px;
    height: 125px;
}

.face {
    fill: #8a8a8a;
    font-size: 10px;
}

.axis {
    font-size: 14px;
    font-weight: bold;
}

/* ribbon */
.ribbon {
    flex: none;
    height: 75px;
    display: flex;
    background-color: #dcdcdc;
}

.mode {
    width: 129px;
    gap: 8px;
    padding-left: 7px;
    background-color: #aaa;
    color: #fff;
    font-weight: bold;
}

.mode::before {
    content: "";
    width: 6px;
    height: 30px;
    margin-right: 18px;
    border: solid #8a8a8a;
    border-width: 0 1px;
}

.mode .down {
    color: #fff;
    width: 7px;
    height: 5px;
}

.group {
    display: flex;
    flex-direction: column;
    align-items: center;
    gap: 7px;
    margin: 6px 0;
    padding: 4px 11px 0;
    border-left: 2px solid #c8c8c8;
}

.mode + .group {
    border-left: none;
}

.tools {
    display: flex;
    gap: 18px;
}

.tools svg {
    width: 36px;
    height: 38px;
}

.label {
    gap: 5px;
    font-size: 12px;
    line-height: 16px;
}

.label .down {
    width: 7px;
    height: 6px;
}

.no-menu {
    padding-right: 12px;
}

.w118 { width: 118px; }
.w92 { width: 92px; }
.w80 { width: 80px; }
.w74 { width: 74px; }
.w88 { width: 88px; }

.active {
    padding: 4px 8px 7px 6px;
    margin: -4px 0 -7px;
    background-color: #5587b4;
}

.big-a {
    fill: #444;
    font-size: 48px;
    font-weight: bold;
}

.sigma {
    fill: #000;
    font-family: "Liberation Serif", serif;
    font-size: 52px;
    font-weight: bold;
}

.dxf {
    fill: #f7e08e;
    font-size: 15px;
    font-weight: bold;
}

/* side panels */
.panel-head {
    flex: none;
    width: 375px;
    height: 31px;
    display: flex;
    align-items: center;
    margin-top: 5px;
    padding: 0 2px 0 6px;
    background-color: #d0d0d0;
    border: 1px solid #aaa;
}

.panel-head h2 {
    flex: 1;
    color: #666;
    font-size: 12px;
}

.rewind svg {
    width: 13px;
    height: 8px;
    margin-right: 14px;
}

.dot {
    width: 12px;
    height: 12px;
}

.grip {
    width: 4px;
    height: 14px;
    margin-left: 8px;
    border: solid #888;
    border-width: 0 1px;
}

.browser {
    display: flex;
    margin: 6px 0 0 5px;
}

.scroll {
    width: 7px;
    background-color: #c1c1c1;
}

.thumb {
    height: 62%;
    border-radius: 4px 4px 0 0;
    background-color: #919191;
}

.tree {
    display: grid;
    gap: 5px;
    padding: 0 0 2px 8px;
}

.tree li {
    height: 25px;
    display: flex;
}

.tree .l1 {
    padding-left: 23px;
}

.tree .l2 {
    padding-left: 45px;
}

.toggle {
    width: 25px;
}

.toggle svg {
    width: 16px;
    height: 18px;
}

.chip {
    display: flex;
    align-items: center;
    gap: 10px;
    padding: 0 11px 0 2px;
    background-color: #cbcbcb;
    font-size: 14px;
}

.chip svg {
    width: 22px;
    height: 22px;
}

.name {
    margin-left: 6px;
}

.selected {
    padding-left: 0;
    background-color: #808080;
    border: 2px solid #cbcbcb;
    border-right: none;
    color: #fff;
    font-weight: bold;
}

.activate {
    display: flex;
    align-items: center;
    padding: 0 10px 0 5px;
    background-color: #cbcbcb;
}

.activate input {
    appearance: none;
    width: 16px;
    height: 16px;
    margin: 0;
    border: 1px solid #333;
    border-radius: 50%;
    background: radial-gradient(#111 2px, #fff 3px);
}

/* bottom row */
.bottom-row {
    width: 100%;
    display: grid;
    grid-template-columns: 1fr auto 1fr;
    align-items: center;
    margin-top: auto;
}

.comments {
    margin-top: 0;
    padding-left: 33px;
}

.navbar {
    display: flex;
    gap: 8px;
    padding-top: 2px;
}

.nav-group {
    height: 30px;
    display: flex;
    align-items: center;
    gap: 9px;
    padding: 0 4px;
    background-color: #c8c8c8;
}

.nav-group button {
    gap: 2px;
}

.nav-group .orbit {
    gap: 6px;
}

.nav-group svg {
    width: 22px;
    height: 22px;
}

.nav-group .down {
    width: 7px;
    height: 5px;
}

.status {
    justify-self: end;
    display: flex;
    align-items: center;
    gap: 16px;
    padding-right: 7px;
    color: #333;
    font-size: 14px;
    font-weight: bold;
}

.status svg {
    width: 20px;
    height: 20px;
}

/* timeline */
.timeline {
    flex: none;
    height: 61px;
    display: flex;
    align-items: center;
    padding: 0 10px 0 11px;
    background-color: #cacaca;
}

.player {
    display: flex;
    gap: 11px;
    width: 172px;
}

.player svg {
    width: 20px;
    height: 20px;
}

.track {
    display: flex;
    gap: 10px;
    margin-top: 12px;
    border-bottom: 3px solid #6e6e6e;
}

.track svg {
    width: 20px;
    height: 20px;
}

.track li::after {
    content: "";
    display: block;
    width: 2px;
    height: 5px;
    margin: 5px auto 0;
    background-color: #6e6e6e;
}

.marker {
    width: 16px;
    height: 40px;
    margin: 6px 0 0 -3px;
}

.settings {
    margin-left: auto;
}

.settings svg {
    width: 22px;
    height: 22px;
    color: #606060;
}
```
